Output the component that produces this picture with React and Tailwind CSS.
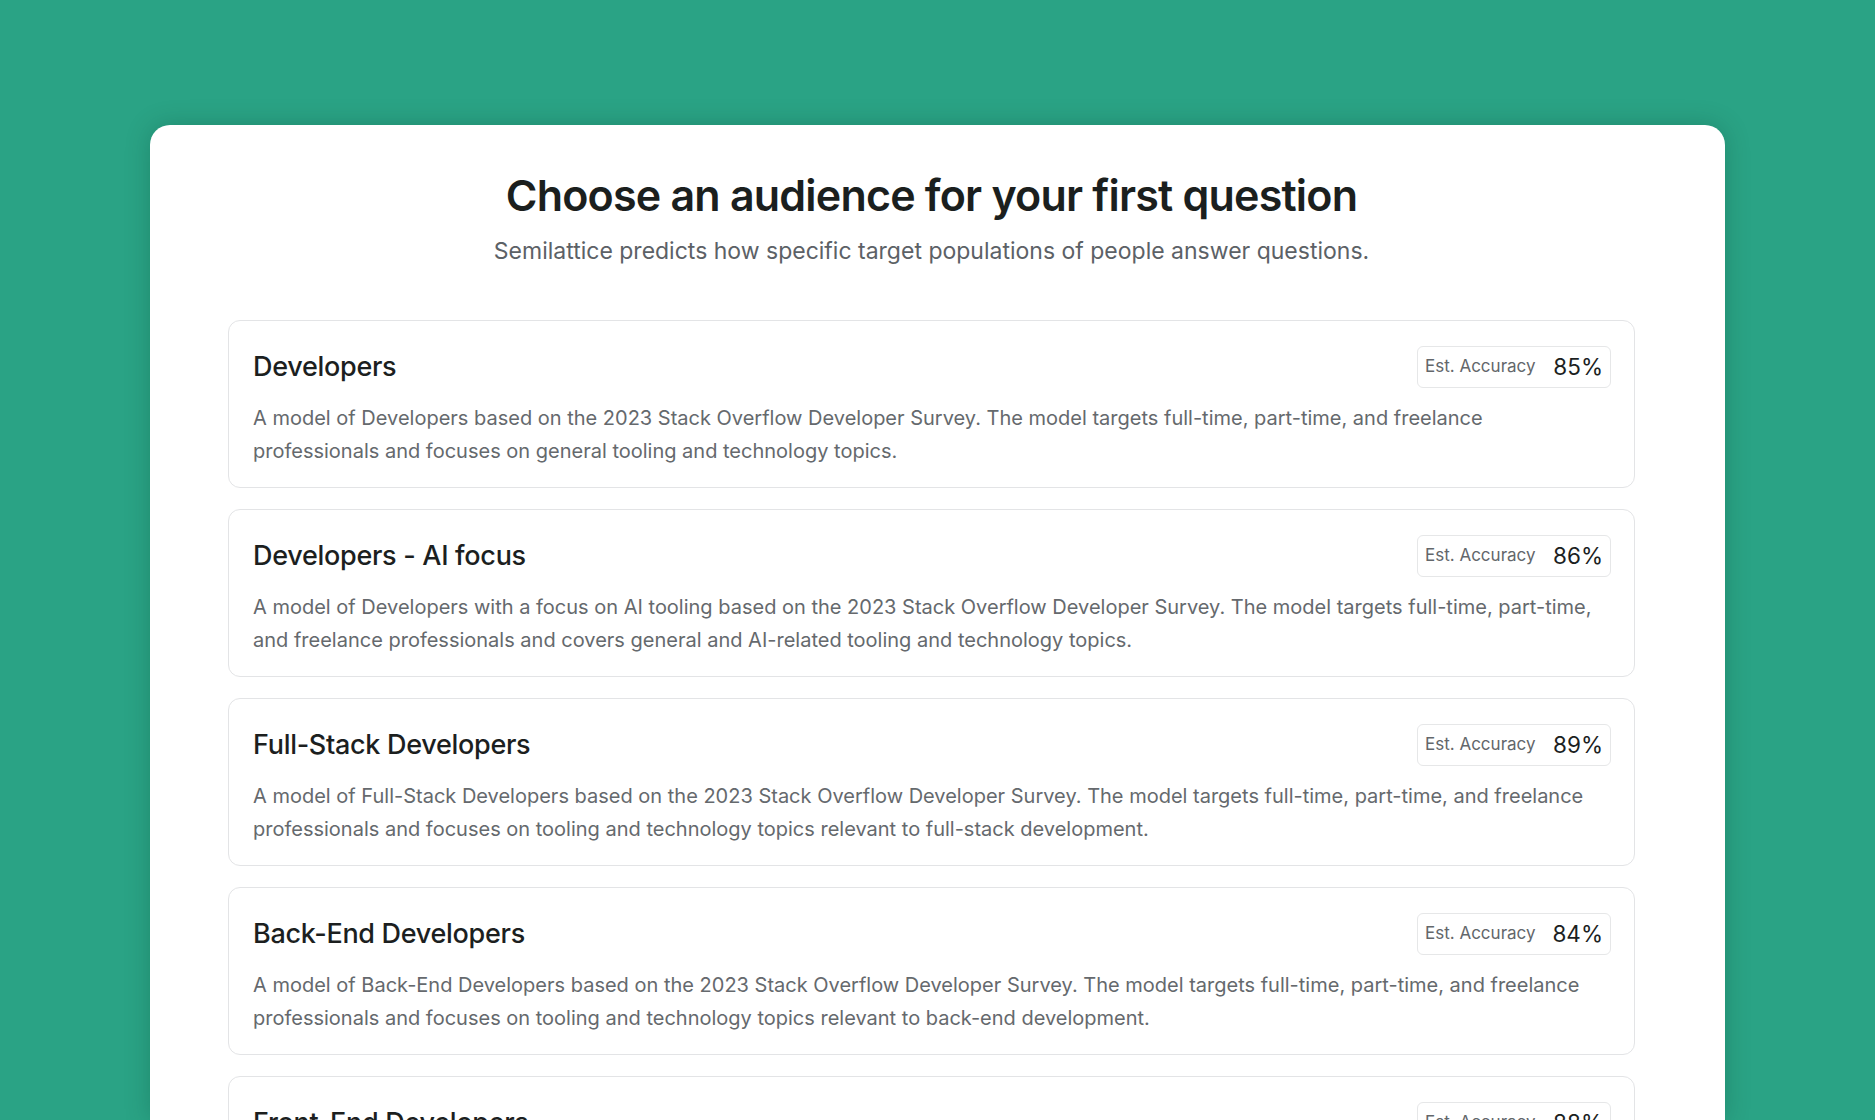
import React from "react";

const audiences = [
  {
    name: "Developers",
    accuracy: "85%",
    text: "A model of Developers based on the 2023 Stack Overflow Developer Survey. The model targets full-time, part-time, and freelance professionals and focuses on general tooling and technology topics.",
  },
  {
    name: "Developers - AI focus",
    accuracy: "86%",
    text: "A model of Developers with a focus on AI tooling based on the 2023 Stack Overflow Developer Survey. The model targets full-time, part-time, and freelance professionals and covers general and AI-related tooling and technology topics.",
  },
  {
    name: "Full-Stack Developers",
    accuracy: "89%",
    text: "A model of Full-Stack Developers based on the 2023 Stack Overflow Developer Survey. The model targets full-time, part-time, and freelance professionals and focuses on tooling and technology topics relevant to full-stack development.",
  },
  {
    name: "Back-End Developers",
    accuracy: "84%",
    text: "A model of Back-End Developers based on the 2023 Stack Overflow Developer Survey. The model targets full-time, part-time, and freelance professionals and focuses on tooling and technology topics relevant to back-end development.",
  },
  {
    name: "Front-End Developers",
    accuracy: "88%",
    text: "A model of Front-End Developers based on the 2023 Stack Overflow Developer Survey. The model targets full-time, part-time, and freelance professionals and focuses on tooling and technology topics relevant to front-end development.",
  },
];

const AudienceCard = ({ item }) => (
  <div className="rounded-xl border border-[#e3e4e6] bg-white pl-[24px] pr-[23px] pt-[25px] pb-[19px]">
    <div className="flex h-[42px] items-center justify-between">
      <h2 className="text-[27px] font-medium text-[#1c1f1f] tracking-[-0.3px]">{item.name}</h2>
      <div className="flex h-[42px] w-[194px] items-center justify-between rounded-md border border-[#e6e7e8] pl-[7px] pr-[7px]">
        <span className="text-[17px] text-[#63676b]">Est. Accuracy</span>
        <span className="text-[22.5px] text-[#1c1f1f]">{item.accuracy}</span>
      </div>
    </div>
    <p className="mt-[14px] text-[20px] leading-[33px] text-[#65696d]">{item.text}</p>
  </div>
);

const App = () => {
  return (
    <div
      className="min-h-screen overflow-hidden bg-[#2aa385] px-[150px] pt-[125px]"
      style={{ fontFamily: "Inter, 'Noto Sans', sans-serif" }}
    >
      <div className="h-[995px] overflow-hidden rounded-t-[20px] bg-white pl-[78px] pr-[90px] pt-[44px] shadow-[0_0_24px_rgba(0,60,40,0.25)]">
        <h1 className="text-center text-[43px] font-semibold leading-[53px] tracking-[-0.8px] text-[#1b1f1e]">
          Choose an audience for your first question
        </h1>
        <p className="mt-[13px] text-center text-[23px] leading-[32px] text-[#5c6166]">
          Semilattice predicts how specific target populations of people answer questions.
        </p>
        <div className="mt-[53px] flex flex-col gap-[21px]">
          {audiences.map((item) => (
            <AudienceCard key={item.name} item={item} />
          ))}
        </div>
      </div>
    </div>
  );
};

export default App;
